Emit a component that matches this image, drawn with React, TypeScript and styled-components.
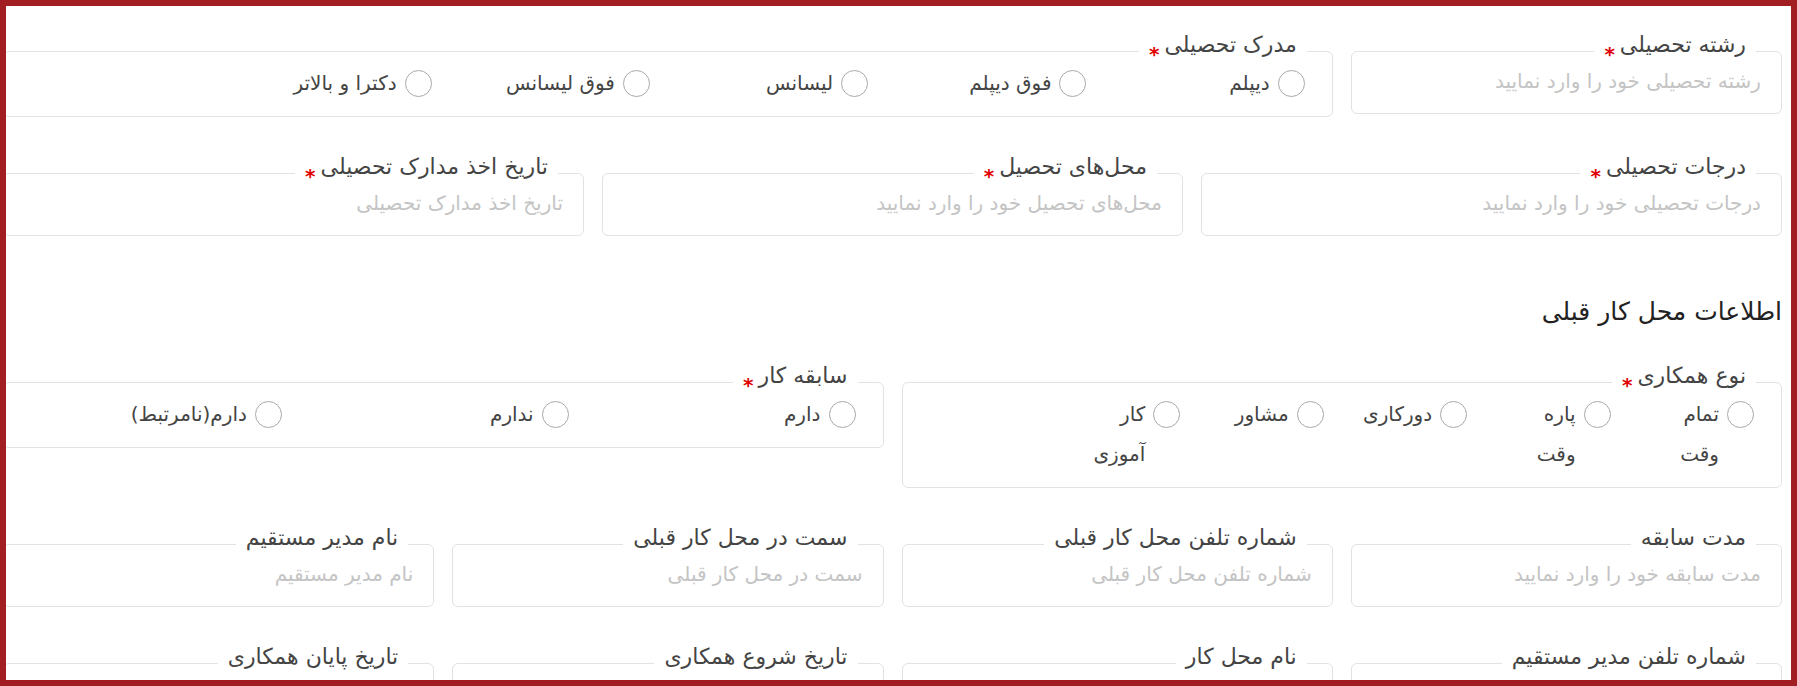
import React from 'react';
import styled, { createGlobalStyle } from 'styled-components';

const Global = createGlobalStyle`
  html, body { margin: 0; padding: 0; background: #fff; }
  body { font-family: "DejaVu Sans", sans-serif; }
  *, *::before, *::after { box-sizing: border-box; }
`;

const Frame = styled.div`
  width: 1797px;
  height: 686px;
  border: 6px solid #a11f23;
  overflow: hidden;
  background: #fff;
  direction: rtl;
`;

const Form = styled.div`
  width: 1779px;
  margin-right: 9px;
  padding-top: 27px;
  display: grid;
  grid-template-columns: repeat(12, 1fr);
  column-gap: 18px;
  row-gap: 38px;
  align-items: start;
`;

const Field = styled.fieldset<{ $span: number }>`
  grid-column: span ${(p) => p.$span};
  margin: 0;
  padding: 0 0 8px;
  min-width: 0;
  border: 1px solid #e2e2e2;
  border-radius: 6px;
`;

const Legend = styled.legend`
  margin: 0 25px -13px 0;
  padding: 0 10px 13px;
  font-size: 22px;
  line-height: 24px;
  color: #444;
  white-space: nowrap;
`;

const Star = styled.span`
  color: #e00000;
  font-size: 20px;
  font-weight: bold;
  line-height: 0;
  margin-right: 5px;
  vertical-align: -9px;
`;

const Input = styled.input`
  display: block;
  width: 100%;
  height: 48px;
  border: 0;
  outline: 0;
  background: transparent;
  padding: 0 20px;
  font-family: inherit;
  font-size: 20px;
  color: #333;
  direction: rtl;
  &::placeholder {
    color: #c4c4c4;
  }
`;

const Options = styled.div<{ $cols: number }>`
  display: grid;
  grid-template-columns: repeat(${(p) => p.$cols}, 1fr);
  padding: 6px 9px 5px;
`;

const Option = styled.label`
  display: flex;
  align-items: flex-start;
  gap: 8px;
  padding-right: 18px;
  padding-left: 17px;
  font-size: 20px;
  line-height: 40px;
  color: #444;
`;

const Circle = styled.span`
  flex: none;
  width: 27px;
  height: 27px;
  margin-top: 7px;
  border-radius: 50%;
  border: 1px solid #a8a8a8;
  background: #fff;
`;

const Title = styled.h3`
  grid-column: 1 / -1;
  margin: 0;
  padding-top: 24px;
  font-size: 25px;
  line-height: 28px;
  font-weight: 500;
  color: #222;
`;

type TextDef = { label: string; placeholder: string; span: number; required?: boolean };

const TextField = ({ label, placeholder, span, required }: TextDef) => (
  <Field $span={span}>
    <Legend>
      {label}
      {required && <Star>*</Star>}
    </Legend>
    <Input placeholder={placeholder} />
  </Field>
);

type RadioDef = { label: string; span: number; cols: number; options: string[]; required?: boolean };

const RadioField = ({ label, span, cols, options, required }: RadioDef) => (
  <Field $span={span}>
    <Legend>
      {label}
      {required && <Star>*</Star>}
    </Legend>
    <Options $cols={cols}>
      {options.map((o) => (
        <Option key={o}>
          <Circle />
          <span>{o}</span>
        </Option>
      ))}
    </Options>
  </Field>
);

export default function App() {
  return (
    <>
      <Global />
      <Frame>
        <Form>
          <TextField span={3} required label="رشته تحصیلی" placeholder="رشته تحصیلی خود را وارد نمایید" />
          <RadioField
            span={9}
            cols={6}
            required
            label="مدرک تحصیلی"
            options={['دیپلم', 'فوق دیپلم', 'لیسانس', 'فوق لیسانس', 'دکترا و بالاتر']}
          />

          <TextField span={4} required label="درجات تحصیلی" placeholder="درجات تحصیلی خود را وارد نمایید" />
          <TextField span={4} required label="محل‌های تحصیل" placeholder="محل‌های تحصیل خود را وارد نمایید" />
          <TextField span={4} required label="تاریخ اخذ مدارک تحصیلی" placeholder="تاریخ اخذ مدارک تحصیلی" />

          <Title>اطلاعات محل کار قبلی</Title>

          <RadioField
            span={6}
            cols={6}
            required
            label="نوع همکاری"
            options={['تمام وقت', 'پاره وقت', 'دورکاری', 'مشاور', 'کار آموزی']}
          />
          <RadioField span={6} cols={3} required label="سابقه کار" options={['دارم', 'ندارم', 'دارم(نامرتبط)']} />

          <TextField span={3} label="مدت سابقه" placeholder="مدت سابقه خود را وارد نمایید" />
          <TextField span={3} label="شماره تلفن محل کار قبلی" placeholder="شماره تلفن محل کار قبلی" />
          <TextField span={3} label="سمت در محل کار قبلی" placeholder="سمت در محل کار قبلی" />
          <TextField span={3} label="نام مدیر مستقیم" placeholder="نام مدیر مستقیم" />

          <TextField span={3} label="شماره تلفن مدیر مستقیم" placeholder="شماره تلفن مدیر مستقیم" />
          <TextField span={3} label="نام محل کار" placeholder="نام محل کار" />
          <TextField span={3} label="تاریخ شروع همکاری" placeholder="تاریخ شروع همکاری" />
          <TextField span={3} label="تاریخ پایان همکاری" placeholder="تاریخ پایان همکاری" />
        </Form>
      </Frame>
    </>
  );
}
